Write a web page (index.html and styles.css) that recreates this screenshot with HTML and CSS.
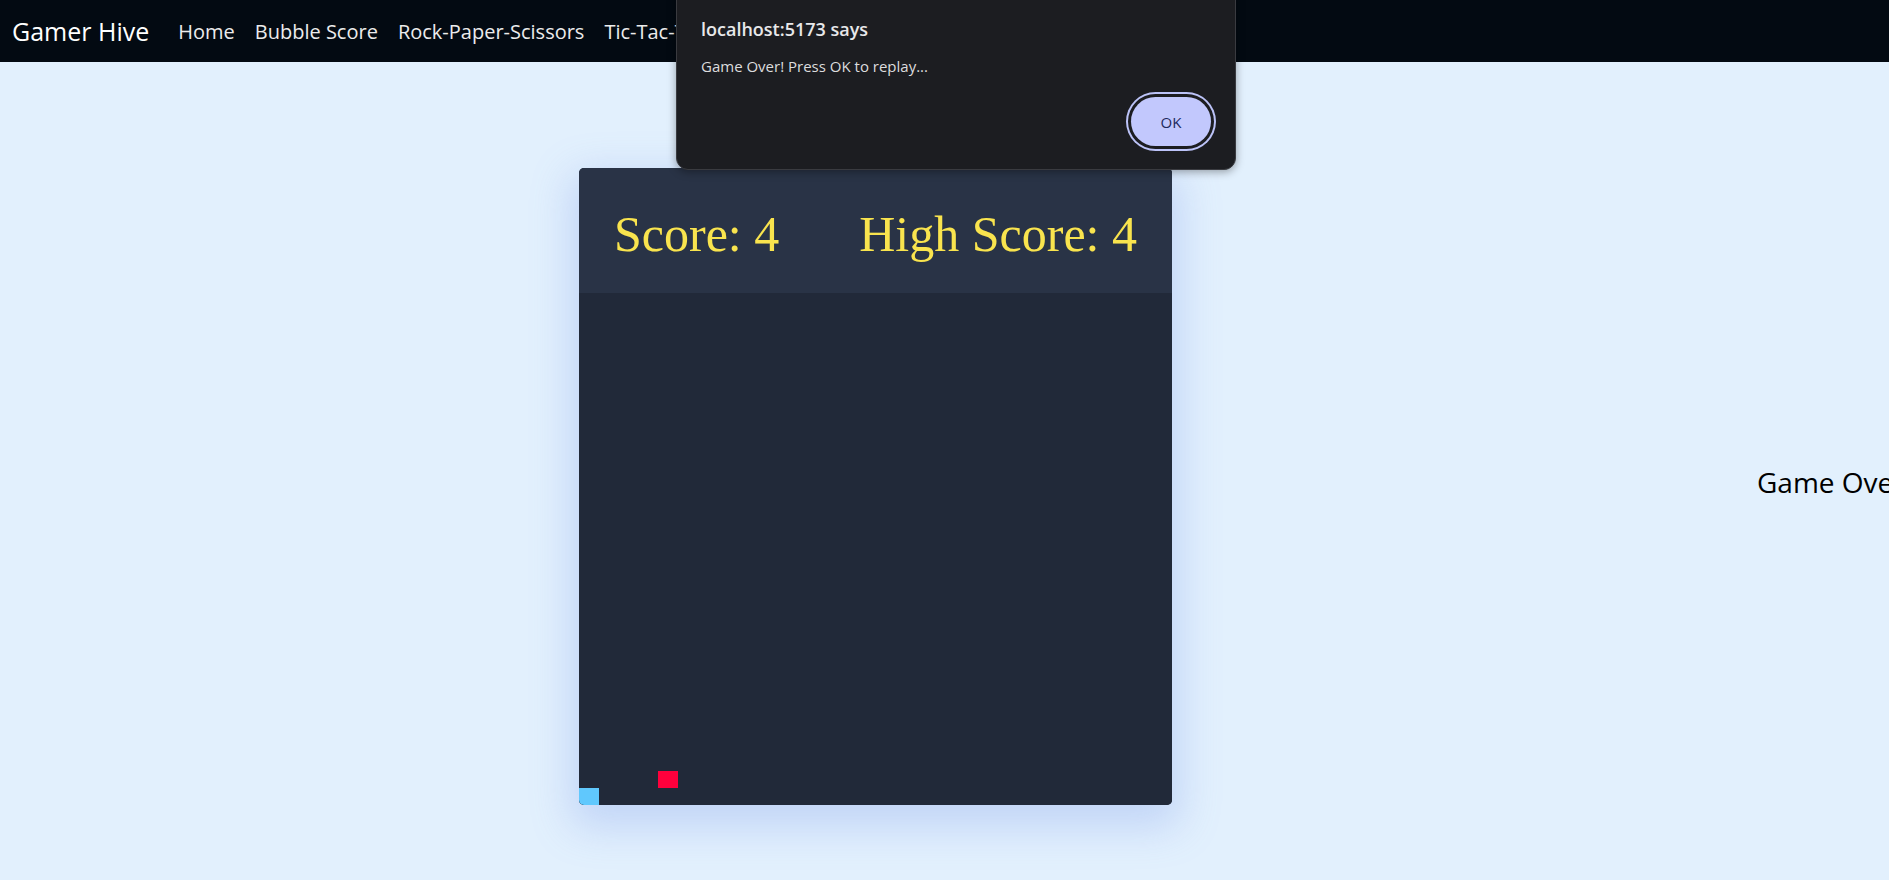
FILE: index.html
```html
<!DOCTYPE html>
<html lang="en">
<head>
<meta charset="utf-8">
<title>Gamer Hive</title>
<link rel="stylesheet" href="styles.css">
</head>
<body>
<nav class="navbar">
  <a class="brand" href="#">Gamer Hive</a>
  <ul class="nav-links">
    <li><a href="#">Home</a></li>
    <li><a href="#">Bubble Score</a></li>
    <li><a href="#">Rock-Paper-Scissors</a></li>
    <li><a href="#">Tic-Tac-Toe</a></li>
  </ul>
</nav>
<main class="main">
  <section class="card">
    <header class="score-bar">
      <span class="score">Score: 4</span>
      <span class="score">High Score: 4</span>
    </header>
    <div class="board">
      <div class="cell food" style="left:79px;top:478px"></div>
      <div class="cell snake" style="left:0px;top:495px"></div>
    </div>
  </section>
  <p class="game-over">Game Over</p>
</main>
<div class="dialog" role="alertdialog">
  <div class="dialog-title">localhost:5173 says</div>
  <div class="dialog-msg">Game Over! Press OK to replay...</div>
  <div class="dialog-actions">
    <button class="ok-btn">OK</button>
  </div>
</div>
</body>
</html>
```
FILE: styles.css
```css
html, body {
  margin: 0;
  padding: 0;
  overflow: hidden;
  height: 100%;
}
body {
  background: #e2f0fd;
  font-family: "Open Sans", "Noto Sans", sans-serif;
  position: relative;
}
.navbar {
  height: 62px;
  background: #030a12;
  display: flex;
  align-items: center;
  padding: 0 12px;
  box-sizing: border-box;
}
.brand {
  color: #ffffff;
  font-size: 25px;
  text-decoration: none;
  margin-right: 29px;
}
.nav-links {
  display: flex;
  list-style: none;
  margin: 0;
  padding: 0;
  gap: 20px;
}
.nav-links a {
  color: #ececec;
  text-decoration: none;
  font-size: 20px;
  white-space: nowrap;
}
.main {
  display: flex;
  align-items: center;
  padding: 106px 0 0 579px;
  gap: 585px;
}
.card {
  flex: 0 0 593px;
  height: 637px;
  border-radius: 5px;
  overflow: hidden;
  background: #212939;
  box-shadow: 0 14px 40px 8px rgba(110, 145, 235, 0.28);
  display: flex;
  flex-direction: column;
}
.score-bar {
  height: 125px;
  flex: 0 0 125px;
  background: #293346;
  display: flex;
  justify-content: space-between;
  align-items: center;
  padding: 6px 35px 0;
  box-sizing: border-box;
}
.score {
  font-family: "Liberation Serif", "DejaVu Serif", serif;
  font-size: 50px;
  color: #f9e44e;
  line-height: 1;
}
.board {
  position: relative;
  flex: 1;
  background: #212939;
}
.cell {
  position: absolute;
  width: 20px;
  height: 17px;
}
.food { background: #ff003c; }
.snake { background: #60c8fd; }
.game-over {
  margin: 0 0 10px 0;
  font-size: 28px;
  color: #000;
  white-space: nowrap;
  flex-shrink: 0;
}
.dialog {
  position: absolute;
  top: -14px;
  left: 676px;
  width: 560px;
  height: 184px;
  box-sizing: border-box;
  background: #1c1d21;
  border: 1px solid #3a3b40;
  border-radius: 12px;
  box-shadow: 0 2px 8px rgba(0, 0, 0, 0.35);
  padding: 29px 24px 0 24px;
  font-family: "Open Sans", "Noto Sans", sans-serif;
}
.dialog-title {
  color: #e8e8ea;
  font-size: 18px;
  font-weight: 600;
  line-height: 26px;
}
.dialog-msg {
  color: #dcdcde;
  font-size: 15px;
  line-height: 20px;
  margin-top: 14px;
}
.dialog-actions {
  display: flex;
  justify-content: flex-end;
  margin-top: 21px;
}
.ok-btn {
  width: 80px;
  height: 49px;
  border: none;
  border-radius: 999px;
  background: #c2c8fd;
  color: #1e2a5e;
  font-family: "Open Sans", "Noto Sans", sans-serif;
  font-size: 15px;
  box-shadow: 0 0 0 3px #1c1d21, 0 0 0 5px #bcc3f8;
}
```
